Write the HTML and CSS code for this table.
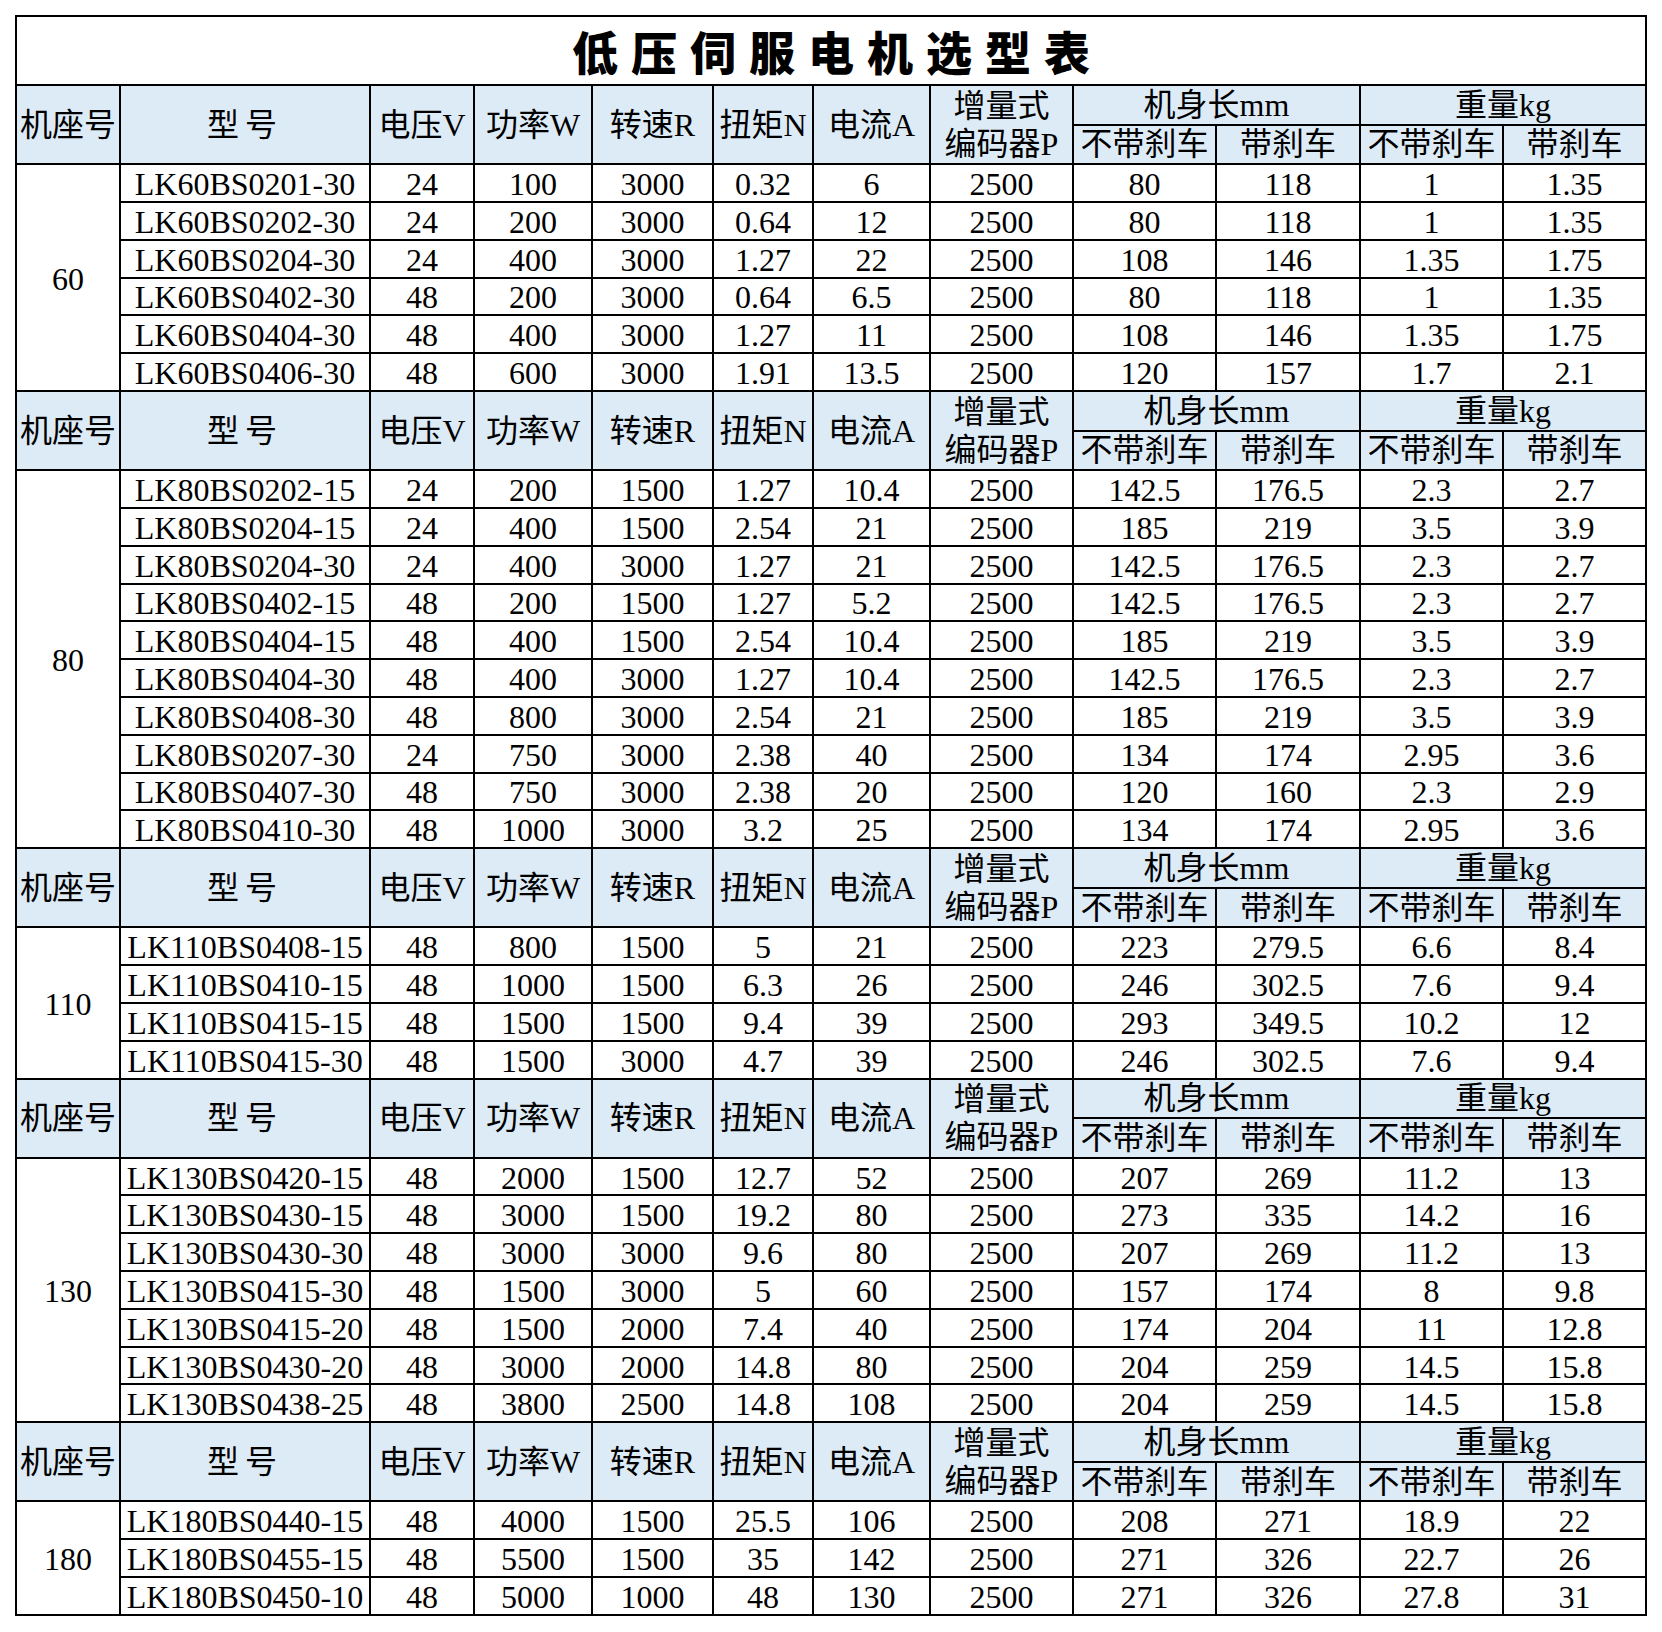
FILE: index.html
```html
<!DOCTYPE html>
<html lang="zh-CN">
<head>
<meta charset="utf-8">
<title>低压伺服电机选型表</title>
<link rel="stylesheet" href="styles.css">
</head>
<body>
<div class="sheet">
<table class="spec">
<colgroup>
<col class="c-seat"><col class="c-model"><col class="c-v"><col class="c-w"><col class="c-r"><col class="c-n"><col class="c-a"><col class="c-p"><col class="c-len"><col class="c-len2"><col class="c-kg"><col class="c-kg2">
</colgroup>
<tbody>
<tr class="title"><td colspan="12"><span class="title-text">低压伺服电机选型表</span></td></tr>

<tr class="hd"><th rowspan="2">机座号</th><th rowspan="2" class="sp">型号</th><th rowspan="2">电压V</th><th rowspan="2">功率W</th><th rowspan="2">转速R</th><th rowspan="2">扭矩N</th><th rowspan="2">电流A</th><th rowspan="2" class="two">增量式<br>编码器P</th><th colspan="2">机身长mm</th><th colspan="2">重量kg</th></tr>
<tr class="hd"><th>不带刹车</th><th>带刹车</th><th>不带刹车</th><th>带刹车</th></tr>
<tr class="r"><td rowspan="6">60</td><td>LK60BS0201-30</td><td>24</td><td>100</td><td>3000</td><td>0.32</td><td>6</td><td>2500</td><td>80</td><td>118</td><td>1</td><td>1.35</td></tr>
<tr class="r"><td>LK60BS0202-30</td><td>24</td><td>200</td><td>3000</td><td>0.64</td><td>12</td><td>2500</td><td>80</td><td>118</td><td>1</td><td>1.35</td></tr>
<tr class="r"><td>LK60BS0204-30</td><td>24</td><td>400</td><td>3000</td><td>1.27</td><td>22</td><td>2500</td><td>108</td><td>146</td><td>1.35</td><td>1.75</td></tr>
<tr class="r"><td>LK60BS0402-30</td><td>48</td><td>200</td><td>3000</td><td>0.64</td><td>6.5</td><td>2500</td><td>80</td><td>118</td><td>1</td><td>1.35</td></tr>
<tr class="r"><td>LK60BS0404-30</td><td>48</td><td>400</td><td>3000</td><td>1.27</td><td>11</td><td>2500</td><td>108</td><td>146</td><td>1.35</td><td>1.75</td></tr>
<tr class="r"><td>LK60BS0406-30</td><td>48</td><td>600</td><td>3000</td><td>1.91</td><td>13.5</td><td>2500</td><td>120</td><td>157</td><td>1.7</td><td>2.1</td></tr>

<tr class="hd"><th rowspan="2">机座号</th><th rowspan="2" class="sp">型号</th><th rowspan="2">电压V</th><th rowspan="2">功率W</th><th rowspan="2">转速R</th><th rowspan="2">扭矩N</th><th rowspan="2">电流A</th><th rowspan="2" class="two">增量式<br>编码器P</th><th colspan="2">机身长mm</th><th colspan="2">重量kg</th></tr>
<tr class="hd"><th>不带刹车</th><th>带刹车</th><th>不带刹车</th><th>带刹车</th></tr>
<tr class="r"><td rowspan="10">80</td><td>LK80BS0202-15</td><td>24</td><td>200</td><td>1500</td><td>1.27</td><td>10.4</td><td>2500</td><td>142.5</td><td>176.5</td><td>2.3</td><td>2.7</td></tr>
<tr class="r"><td>LK80BS0204-15</td><td>24</td><td>400</td><td>1500</td><td>2.54</td><td>21</td><td>2500</td><td>185</td><td>219</td><td>3.5</td><td>3.9</td></tr>
<tr class="r"><td>LK80BS0204-30</td><td>24</td><td>400</td><td>3000</td><td>1.27</td><td>21</td><td>2500</td><td>142.5</td><td>176.5</td><td>2.3</td><td>2.7</td></tr>
<tr class="r"><td>LK80BS0402-15</td><td>48</td><td>200</td><td>1500</td><td>1.27</td><td>5.2</td><td>2500</td><td>142.5</td><td>176.5</td><td>2.3</td><td>2.7</td></tr>
<tr class="r"><td>LK80BS0404-15</td><td>48</td><td>400</td><td>1500</td><td>2.54</td><td>10.4</td><td>2500</td><td>185</td><td>219</td><td>3.5</td><td>3.9</td></tr>
<tr class="r"><td>LK80BS0404-30</td><td>48</td><td>400</td><td>3000</td><td>1.27</td><td>10.4</td><td>2500</td><td>142.5</td><td>176.5</td><td>2.3</td><td>2.7</td></tr>
<tr class="r"><td>LK80BS0408-30</td><td>48</td><td>800</td><td>3000</td><td>2.54</td><td>21</td><td>2500</td><td>185</td><td>219</td><td>3.5</td><td>3.9</td></tr>
<tr class="r"><td>LK80BS0207-30</td><td>24</td><td>750</td><td>3000</td><td>2.38</td><td>40</td><td>2500</td><td>134</td><td>174</td><td>2.95</td><td>3.6</td></tr>
<tr class="r"><td>LK80BS0407-30</td><td>48</td><td>750</td><td>3000</td><td>2.38</td><td>20</td><td>2500</td><td>120</td><td>160</td><td>2.3</td><td>2.9</td></tr>
<tr class="r"><td>LK80BS0410-30</td><td>48</td><td>1000</td><td>3000</td><td>3.2</td><td>25</td><td>2500</td><td>134</td><td>174</td><td>2.95</td><td>3.6</td></tr>

<tr class="hd"><th rowspan="2">机座号</th><th rowspan="2" class="sp">型号</th><th rowspan="2">电压V</th><th rowspan="2">功率W</th><th rowspan="2">转速R</th><th rowspan="2">扭矩N</th><th rowspan="2">电流A</th><th rowspan="2" class="two">增量式<br>编码器P</th><th colspan="2">机身长mm</th><th colspan="2">重量kg</th></tr>
<tr class="hd"><th>不带刹车</th><th>带刹车</th><th>不带刹车</th><th>带刹车</th></tr>
<tr class="r"><td rowspan="4">110</td><td>LK110BS0408-15</td><td>48</td><td>800</td><td>1500</td><td>5</td><td>21</td><td>2500</td><td>223</td><td>279.5</td><td>6.6</td><td>8.4</td></tr>
<tr class="r"><td>LK110BS0410-15</td><td>48</td><td>1000</td><td>1500</td><td>6.3</td><td>26</td><td>2500</td><td>246</td><td>302.5</td><td>7.6</td><td>9.4</td></tr>
<tr class="r"><td>LK110BS0415-15</td><td>48</td><td>1500</td><td>1500</td><td>9.4</td><td>39</td><td>2500</td><td>293</td><td>349.5</td><td>10.2</td><td>12</td></tr>
<tr class="r"><td>LK110BS0415-30</td><td>48</td><td>1500</td><td>3000</td><td>4.7</td><td>39</td><td>2500</td><td>246</td><td>302.5</td><td>7.6</td><td>9.4</td></tr>

<tr class="hd"><th rowspan="2">机座号</th><th rowspan="2" class="sp">型号</th><th rowspan="2">电压V</th><th rowspan="2">功率W</th><th rowspan="2">转速R</th><th rowspan="2">扭矩N</th><th rowspan="2">电流A</th><th rowspan="2" class="two">增量式<br>编码器P</th><th colspan="2">机身长mm</th><th colspan="2">重量kg</th></tr>
<tr class="hd"><th>不带刹车</th><th>带刹车</th><th>不带刹车</th><th>带刹车</th></tr>
<tr class="r"><td rowspan="7">130</td><td>LK130BS0420-15</td><td>48</td><td>2000</td><td>1500</td><td>12.7</td><td>52</td><td>2500</td><td>207</td><td>269</td><td>11.2</td><td>13</td></tr>
<tr class="r"><td>LK130BS0430-15</td><td>48</td><td>3000</td><td>1500</td><td>19.2</td><td>80</td><td>2500</td><td>273</td><td>335</td><td>14.2</td><td>16</td></tr>
<tr class="r"><td>LK130BS0430-30</td><td>48</td><td>3000</td><td>3000</td><td>9.6</td><td>80</td><td>2500</td><td>207</td><td>269</td><td>11.2</td><td>13</td></tr>
<tr class="r"><td>LK130BS0415-30</td><td>48</td><td>1500</td><td>3000</td><td>5</td><td>60</td><td>2500</td><td>157</td><td>174</td><td>8</td><td>9.8</td></tr>
<tr class="r"><td>LK130BS0415-20</td><td>48</td><td>1500</td><td>2000</td><td>7.4</td><td>40</td><td>2500</td><td>174</td><td>204</td><td>11</td><td>12.8</td></tr>
<tr class="r"><td>LK130BS0430-20</td><td>48</td><td>3000</td><td>2000</td><td>14.8</td><td>80</td><td>2500</td><td>204</td><td>259</td><td>14.5</td><td>15.8</td></tr>
<tr class="r"><td>LK130BS0438-25</td><td>48</td><td>3800</td><td>2500</td><td>14.8</td><td>108</td><td>2500</td><td>204</td><td>259</td><td>14.5</td><td>15.8</td></tr>

<tr class="hd"><th rowspan="2">机座号</th><th rowspan="2" class="sp">型号</th><th rowspan="2">电压V</th><th rowspan="2">功率W</th><th rowspan="2">转速R</th><th rowspan="2">扭矩N</th><th rowspan="2">电流A</th><th rowspan="2" class="two">增量式<br>编码器P</th><th colspan="2">机身长mm</th><th colspan="2">重量kg</th></tr>
<tr class="hd"><th>不带刹车</th><th>带刹车</th><th>不带刹车</th><th>带刹车</th></tr>
<tr class="r"><td rowspan="3">180</td><td>LK180BS0440-15</td><td>48</td><td>4000</td><td>1500</td><td>25.5</td><td>106</td><td>2500</td><td>208</td><td>271</td><td>18.9</td><td>22</td></tr>
<tr class="r"><td>LK180BS0455-15</td><td>48</td><td>5500</td><td>1500</td><td>35</td><td>142</td><td>2500</td><td>271</td><td>326</td><td>22.7</td><td>26</td></tr>
<tr class="r"><td>LK180BS0450-10</td><td>48</td><td>5000</td><td>1000</td><td>48</td><td>130</td><td>2500</td><td>271</td><td>326</td><td>27.8</td><td>31</td></tr>
</tbody>
</table>
</div>
</body>
</html>
```

FILE: styles.css
```css
html, body {
  margin: 0;
  padding: 0;
  background: #ffffff;
}

.sheet {
  padding: 15px 0 0 15px;
}

.spec {
  border-collapse: collapse;
  table-layout: fixed;
  width: 1630px;
  font-family: "Liberation Serif", "Noto Sans CJK SC", serif;
  font-size: 32px;
  color: #000000;
}

.c-seat { width: 104px; }
.c-model { width: 250px; }
.c-v { width: 104px; }
.c-w { width: 118px; }
.c-r { width: 121px; }
.c-n { width: 100px; }
.c-a { width: 117px; }
.c-p { width: 143px; }
.c-len { width: 143px; }
.c-len2 { width: 144px; }
.c-kg { width: 143px; }
.c-kg2 { width: 143px; }

.spec td,
.spec th {
  border: 2px solid #000000;
  padding: 0;
  text-align: center;
  vertical-align: middle;
  white-space: nowrap;
  overflow: hidden;
  line-height: 1;
  font-weight: normal;
}

.title td {
  height: 67px;
  background: #ffffff;
}

.title-text {
  display: inline-block;
  font-family: "Noto Sans CJK SC", sans-serif;
  font-weight: 900;
  font-size: 46px;
  letter-spacing: 13px;
  padding-left: 13px;
  line-height: 1;
}

.hd th {
  background: #ddebf7;
  height: 37.6px;
}

.hd th.two {
  line-height: 38px;
}

.hd th.sp {
  letter-spacing: 6px;
}

.r td {
  height: 33.8px;
  padding-top: 2px;
}
```
